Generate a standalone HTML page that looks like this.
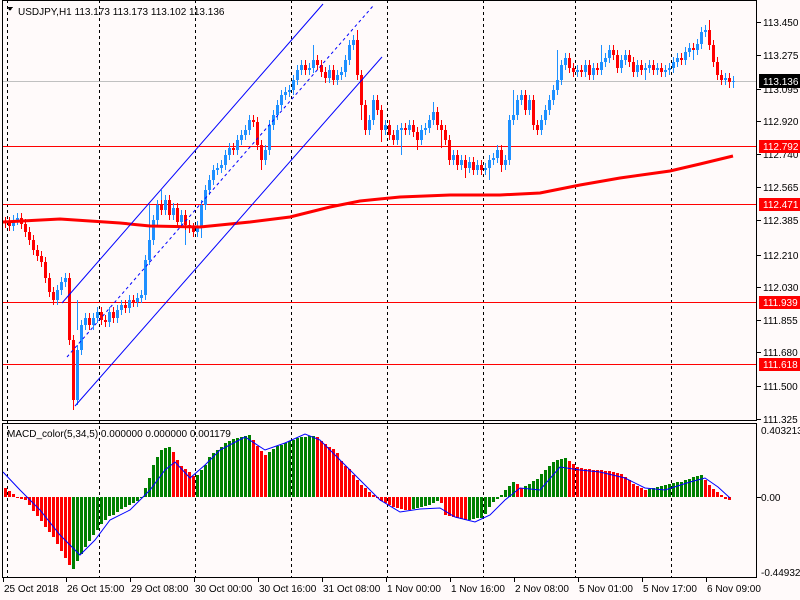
<!DOCTYPE html>
<html><head><meta charset="utf-8"><style>
html,body{margin:0;padding:0;background:#fffafa;}
svg{display:block}
text{font-family:"Liberation Sans",sans-serif;font-size:10px;fill:#000}
</style></head><body>
<svg width="800" height="600" viewBox="0 0 800 600" shape-rendering="crispEdges">
<defs>
<filter id="wk" filterUnits="userSpaceOnUse" x="0" y="0" width="800" height="600"><feMorphology operator="dilate" radius="0 5"/></filter>
</defs>
<rect width="800" height="600" fill="#fffafa"/>
<g stroke="#000" stroke-dasharray="3,3">
<path d="M7.5 0V578M99.5 0V578M195.5 0V578M291.5 0V578M387.5 0V578M483.5 0V578M575.5 0V578M671.5 0V578"/>
</g>
<path d="M3 81.5H757" stroke="#c0c0c0"/>
<path d="M3 146.5H757M3 204.5H757M3 302.5H757M3 364.5H757" stroke="#f00"/>

<g filter="url(#wk)">
<path stroke="#1e90ff" stroke-width="1" d="M13.5 220V226M17.5 218V220M57.5 290V300M61.5 282V290M65.5 278V282M77.5 350V400M81.5 325V350M85.5 318V325M93.5 318V325M97.5 312V318M109.5 312V322M117.5 310V318M121.5 305V310M129.5 300V308M137.5 298V302M141.5 295V298M145.5 260V295M149.5 240V260M153.5 220V240M157.5 205V220M165.5 200V210M173.5 208V215M181.5 215V222M197.5 226V232M201.5 205V226M205.5 190V205M209.5 180V190M213.5 170V180M217.5 168V170M221.5 165V168M225.5 155V165M229.5 148V155M237.5 140V150M241.5 135V140M245.5 130V135M249.5 120V130M265.5 150V160M269.5 125V150M273.5 115V125M277.5 105V115M281.5 95V105M285.5 92V95M289.5 90V92M293.5 80V90M297.5 70V80M301.5 65V70M309.5 68V70M313.5 60V68M329.5 70V78M337.5 75V80M341.5 72V75M345.5 60V72M349.5 45V60M353.5 40V45M369.5 120V130M373.5 100V120M385.5 125V130M397.5 130V140M401.5 128V130M409.5 125V130M421.5 130V140M425.5 128V130M429.5 120V128M433.5 112V120M453.5 155V160M461.5 160V165M469.5 162V168M477.5 165V170M485.5 168V170M489.5 160V168M493.5 158V160M497.5 150V158M505.5 160V165M509.5 120V160M513.5 115V120M517.5 100V115M521.5 95V100M529.5 100V110M541.5 120V130M545.5 110V120M549.5 100V110M553.5 90V100M557.5 80V90M561.5 65V80M565.5 58V65M577.5 70V72M585.5 65V72M593.5 68V75M601.5 62V70M605.5 58V62M609.5 50V58M621.5 60V68M625.5 55V60M637.5 65V72M645.5 68V70M649.5 65V68M657.5 68V70M665.5 70V72M669.5 68V70M673.5 62V68M677.5 58V62M685.5 52V60M689.5 48V52M697.5 44V50M701.5 32V44M705.5 30V32M725.5 78V80M733.5 81V82"/>
</g>
<g filter="url(#wk)">
<path stroke="#f00" stroke-width="1" d="M5.5 222V223M9.5 222V226M21.5 218V224M25.5 224V232M29.5 232V240M33.5 240V250M37.5 250V256M41.5 256V262M45.5 262V278M49.5 278V292M53.5 292V300M69.5 278V340M73.5 340V400M89.5 318V325M101.5 312V320M105.5 320V322M113.5 312V318M125.5 305V308M133.5 300V302M161.5 205V210M169.5 200V215M177.5 208V222M185.5 215V225M189.5 225V228M193.5 228V232M233.5 148V150M253.5 120V122M257.5 122V145M261.5 145V160M305.5 65V70M317.5 60V65M321.5 65V72M325.5 72V78M333.5 70V80M357.5 40V75M361.5 75V105M365.5 105V130M377.5 100V110M381.5 110V130M389.5 125V135M393.5 135V140M405.5 128V130M413.5 125V132M417.5 132V140M437.5 112V125M441.5 125V130M445.5 130V140M449.5 140V160M457.5 155V165M465.5 160V168M473.5 162V170M481.5 165V170M501.5 150V165M525.5 95V110M533.5 100V125M537.5 125V130M569.5 58V68M573.5 68V72M581.5 70V72M589.5 65V75M597.5 68V70M613.5 50V55M617.5 55V68M629.5 55V62M633.5 62V72M641.5 65V70M653.5 65V70M661.5 68V72M681.5 58V60M693.5 48V50M709.5 30V45M713.5 45V62M717.5 62V75M721.5 75V80M729.5 78V82"/>
</g>
<path stroke="#1e90ff" d="M77.5 330V300M149.5 240V205M161.5 200V190M185.5 230V245M201.5 226V238M313.5 60V45M433.5 112V102M513.5 115V90M557.5 80V50M601.5 62V45M645.5 70V80M693.5 50V60M705.5 30V25M401.5 135V155M489.5 168V180M525.5 110V95M733.5 82V88"/>
<path stroke="#f00" d="M73.5 400V410M261.5 160V170M357.5 40V30M381.5 130V142M441.5 130V148M501.5 165V172M709.5 30V20M729.5 82V88M361.5 105V120M417.5 140V150M465.5 168V178"/>

<path stroke="#1e90ff" stroke-width="3" d="M13.5 220V226M17.5 218V220M57.5 290V300M61.5 282V290M65.5 278V282M77.5 350V400M81.5 325V350M85.5 318V325M93.5 318V325M97.5 312V318M109.5 312V322M117.5 310V318M121.5 305V310M129.5 300V308M137.5 298V302M141.5 295V298M145.5 260V295M149.5 240V260M153.5 220V240M157.5 205V220M165.5 200V210M173.5 208V215M181.5 215V222M197.5 226V232M201.5 205V226M205.5 190V205M209.5 180V190M213.5 170V180M217.5 168V170M221.5 165V168M225.5 155V165M229.5 148V155M237.5 140V150M241.5 135V140M245.5 130V135M249.5 120V130M265.5 150V160M269.5 125V150M273.5 115V125M277.5 105V115M281.5 95V105M285.5 92V95M289.5 90V92M293.5 80V90M297.5 70V80M301.5 65V70M309.5 68V70M313.5 60V68M329.5 70V78M337.5 75V80M341.5 72V75M345.5 60V72M349.5 45V60M353.5 40V45M369.5 120V130M373.5 100V120M385.5 125V130M397.5 130V140M401.5 128V130M409.5 125V130M421.5 130V140M425.5 128V130M429.5 120V128M433.5 112V120M453.5 155V160M461.5 160V165M469.5 162V168M477.5 165V170M485.5 168V170M489.5 160V168M493.5 158V160M497.5 150V158M505.5 160V165M509.5 120V160M513.5 115V120M517.5 100V115M521.5 95V100M529.5 100V110M541.5 120V130M545.5 110V120M549.5 100V110M553.5 90V100M557.5 80V90M561.5 65V80M565.5 58V65M577.5 70V72M585.5 65V72M593.5 68V75M601.5 62V70M605.5 58V62M609.5 50V58M621.5 60V68M625.5 55V60M637.5 65V72M645.5 68V70M649.5 65V68M657.5 68V70M665.5 70V72M669.5 68V70M673.5 62V68M677.5 58V62M685.5 52V60M689.5 48V52M697.5 44V50M701.5 32V44M705.5 30V32M725.5 78V80M733.5 81V82"/>
<path stroke="#f00" stroke-width="3" d="M5.5 222V223M9.5 222V226M21.5 218V224M25.5 224V232M29.5 232V240M33.5 240V250M37.5 250V256M41.5 256V262M45.5 262V278M49.5 278V292M53.5 292V300M69.5 278V340M73.5 340V400M89.5 318V325M101.5 312V320M105.5 320V322M113.5 312V318M125.5 305V308M133.5 300V302M161.5 205V210M169.5 200V215M177.5 208V222M185.5 215V225M189.5 225V228M193.5 228V232M233.5 148V150M253.5 120V122M257.5 122V145M261.5 145V160M305.5 65V70M317.5 60V65M321.5 65V72M325.5 72V78M333.5 70V80M357.5 40V75M361.5 75V105M365.5 105V130M377.5 100V110M381.5 110V130M389.5 125V135M393.5 135V140M405.5 128V130M413.5 125V132M417.5 132V140M437.5 112V125M441.5 125V130M445.5 130V140M449.5 140V160M457.5 155V165M465.5 160V168M473.5 162V170M481.5 165V170M501.5 150V165M525.5 95V110M533.5 100V125M537.5 125V130M569.5 58V68M573.5 68V72M581.5 70V72M589.5 65V75M597.5 68V70M613.5 50V55M617.5 55V68M629.5 55V62M633.5 62V72M641.5 65V70M653.5 65V70M661.5 68V72M681.5 58V60M693.5 48V50M709.5 30V45M713.5 45V62M717.5 62V75M721.5 75V80M729.5 78V82"/>

<polyline fill="none" stroke="#f00" stroke-width="3" shape-rendering="auto" points="3,222 60,219 120,223 150,226 200,227 250,222 290,217 330,207 360,201 400,197 450,195 500,195 540,193 560,189 580,185 620,178 670,171 700,164 733,156"/>
<g stroke="#00f" shape-rendering="auto">
<line x1="62" y1="303" x2="323" y2="4"/>
<line x1="75" y1="406" x2="382" y2="57"/>
<line x1="67" y1="357" x2="373" y2="6" stroke-dasharray="3,3"/>
</g>

<path stroke="#f00" stroke-width="3" d="M5.5 497V488M9.5 497V491M13.5 497V494M17.5 497V498M21.5 497V499M25.5 497V500M29.5 497V505M33.5 497V511M37.5 497V516M41.5 497V521M45.5 497V527M49.5 497V532M53.5 497V537M57.5 497V544M61.5 497V551M65.5 497V558M69.5 497V565M173.5 497V452M177.5 497V460M181.5 497V466M185.5 497V469M189.5 497V472M193.5 497V476M253.5 497V440M257.5 497V446M261.5 497V451M265.5 497V455M317.5 497V437M321.5 497V441M325.5 497V444M329.5 497V447M333.5 497V449M337.5 497V453M341.5 497V461M345.5 497V466M349.5 497V469M353.5 497V475M357.5 497V480M361.5 497V485M365.5 497V488M369.5 497V492M373.5 497V495M377.5 497V498M381.5 497V501M385.5 497V503M389.5 497V505M393.5 497V507M397.5 497V508M401.5 497V509M405.5 497V510M409.5 497V510M441.5 497V503M445.5 497V515M449.5 497V516M453.5 497V517M457.5 497V518M461.5 497V519M465.5 497V520M517.5 497V484M521.5 497V488M569.5 497V461M573.5 497V464M577.5 497V467M581.5 497V468M585.5 497V469M589.5 497V469M593.5 497V470M597.5 497V470M601.5 497V470M605.5 497V471M609.5 497V471M613.5 497V472M617.5 497V473M621.5 497V474M625.5 497V477M629.5 497V480M633.5 497V484M637.5 497V486M641.5 497V488M645.5 497V490M705.5 497V480M709.5 497V485M713.5 497V489M717.5 497V492M721.5 497V495M725.5 497V499M729.5 497V500"/>
<path stroke="#008000" stroke-width="3" d="M73.5 497V569M77.5 497V561M81.5 497V554M85.5 497V547M89.5 497V541M93.5 497V535M97.5 497V530M101.5 497V524M105.5 497V520M109.5 497V516M113.5 497V515M117.5 497V512M121.5 497V509M125.5 497V507M129.5 497V505M133.5 497V503M137.5 497V501M141.5 497V498M145.5 497V488M149.5 497V478M153.5 497V465M157.5 497V457M161.5 497V450M165.5 497V448M169.5 497V447M197.5 497V475M201.5 497V470M205.5 497V465M209.5 497V457M213.5 497V453M217.5 497V450M221.5 497V447M225.5 497V443M229.5 497V441M233.5 497V439M237.5 497V438M241.5 497V437M245.5 497V436M249.5 497V435M269.5 497V452M273.5 497V449M277.5 497V446M281.5 497V445M285.5 497V443M289.5 497V441M293.5 497V440M297.5 497V438M301.5 497V437M305.5 497V437M309.5 497V436M313.5 497V436M413.5 497V509M417.5 497V508M421.5 497V507M425.5 497V506M429.5 497V505M433.5 497V503M437.5 497V501M469.5 497V520M473.5 497V519M477.5 497V518M481.5 497V518M485.5 497V514M489.5 497V507M493.5 497V502M497.5 497V499M501.5 497V495M505.5 497V490M509.5 497V486M513.5 497V482M525.5 497V486M529.5 497V484M533.5 497V481M537.5 497V479M541.5 497V474M545.5 497V470M549.5 497V466M553.5 497V462M557.5 497V460M561.5 497V459M565.5 497V458M649.5 497V489M653.5 497V488M657.5 497V487M661.5 497V486M665.5 497V485M669.5 497V484M673.5 497V483M677.5 497V482M681.5 497V482M685.5 497V480M689.5 497V479M693.5 497V477M697.5 497V476M701.5 497V475"/>
<polyline fill="none" stroke="#00f" shape-rendering="auto" points="3,472 20,490 40,510 60,535 80,555 95,540 110,520 130,510 150,490 165,470 175,462 190,478 205,465 220,450 245,437 265,450 285,443 305,434 320,440 340,460 360,480 380,500 400,512 420,509 440,508 455,517 475,522 490,515 505,500 520,488 540,490 560,467 580,470 600,472 625,478 645,488 665,490 690,482 705,478 718,487 730,498"/>

<rect x="2.5" y="0.5" width="754" height="420" fill="none" stroke="#000"/>
<rect x="2.5" y="423.5" width="754" height="154" fill="none" stroke="#000"/>

<path stroke="#000" d="M757 22.5H761M757 55.5H761M757 89.5H761M757 121.5H761M757 154.5H761M757 187.5H761M757 220.5H761M757 255.5H761M757 287.5H761M757 320.5H761M757 352.5H761M757 386.5H761M757 419.5H761M757 497.5H761"/>
<text x="763" y="26">113.450</text>
<text x="763" y="59">113.275</text>
<text x="763" y="93">113.095</text>
<text x="763" y="125">112.920</text>
<text x="763" y="158">112.740</text>
<text x="763" y="191">112.565</text>
<text x="763" y="224">112.385</text>
<text x="763" y="259">112.210</text>
<text x="763" y="291">112.030</text>
<text x="763" y="324">111.855</text>
<text x="763" y="356">111.680</text>
<text x="763" y="390">111.500</text>
<text x="763" y="423">111.325</text>
<rect x="759" y="74" width="41" height="14" fill="#000"/><text x="763" y="85" style="fill:#fff">113.136</text>
<rect x="759" y="140" width="41" height="13" fill="#f00"/><text x="763" y="150" style="fill:#fff">112.792</text>
<rect x="759" y="198" width="41" height="13" fill="#f00"/><text x="763" y="208" style="fill:#fff">112.471</text>
<rect x="759" y="296" width="41" height="13" fill="#f00"/><text x="763" y="306" style="fill:#fff">111.939</text>
<rect x="759" y="358" width="41" height="13" fill="#f00"/><text x="763" y="368" style="fill:#fff">111.618</text>
<text x="761" y="434">0.403213</text>
<text x="761" y="501">0.00</text>
<text x="761" y="576">-0.449328</text>

<path stroke="#000" d="M3.5 578V582M66.5 578V582M130.5 578V582M194.5 578V582M258.5 578V582M322.5 578V582M386.5 578V582M450.5 578V582M514.5 578V582M578.5 578V582M642.5 578V582M706.5 578V582"/>
<text x="4" y="592">25 Oct 2018</text>
<text x="67" y="592">26 Oct 15:00</text>
<text x="131" y="592">29 Oct 08:00</text>
<text x="195" y="592">30 Oct 00:00</text>
<text x="259" y="592">30 Oct 16:00</text>
<text x="323" y="592">31 Oct 08:00</text>
<text x="387" y="592">1 Nov 00:00</text>
<text x="451" y="592">1 Nov 16:00</text>
<text x="515" y="592">2 Nov 08:00</text>
<text x="579" y="592">5 Nov 01:00</text>
<text x="643" y="592">5 Nov 17:00</text>
<text x="707" y="592">6 Nov 09:00</text>

<path d="M7 7H13L10 11Z" fill="#000"/>
<text x="18" y="15">USDJPY,H1  113.173 113.173 113.102 113.136</text>
<text x="7" y="437">MACD_color(5,34,5) 0.000000 0.000000 0.001179</text>
</svg>
</body></html>
